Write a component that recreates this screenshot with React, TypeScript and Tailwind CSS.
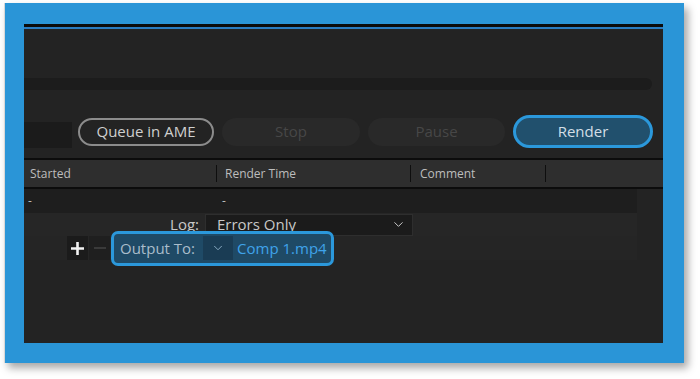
import { ChevronDown } from "lucide-react";

// Render queue panel, zoomed in, with the Render button and the Output To row called out.
const font = { fontFamily: '"Open Sans", "Noto Sans", sans-serif' };

function Divider() {
  return <span className="h-[17px] w-px bg-[#0e0e0e]" />;
}

export default function App() {
  return (
    <div className="h-[379px] w-[700px] overflow-hidden bg-white" style={font}>
      <div className="ml-[4px] mt-[3px] h-[360px] w-[680px] border-l border-[#d8d8d8] bg-[#2a95d7] pl-[19px] pt-[21px] shadow-[4px_5px_8px_rgba(0,0,0,0.35)]">
        <div className="flex h-[319px] w-[639px] flex-col bg-[#232323]">
          <div className="h-[3px] bg-[#0b0b0b]" />
          <div className="h-[2px] bg-[#2a7cc0]" />

          <div className="mt-[49px] h-[12px] w-[628px] rounded-r-full bg-[#1c1c1c]" />

          <div className="mt-[25px] flex h-[33px] items-center">
            <div className="mt-[7px] h-[26px] w-[48px] bg-[#1b1b1b]" />
            <div className="ml-[6px] flex h-[28px] w-[136px] items-center justify-center rounded-full border-2 border-[#8c8c8c] text-[15px] text-[#cfcfcf]">
              Queue in AME
            </div>
            <div className="ml-[8px] flex h-[28px] w-[138px] items-center justify-center rounded-full bg-[#292929] text-[15px] text-[#474747]">
              Stop
            </div>
            <div className="ml-[8px] flex h-[28px] w-[137px] items-center justify-center rounded-full bg-[#292929] text-[15px] text-[#474747]">
              Pause
            </div>
            <div className="ml-[8px] flex h-[33px] w-[140px] items-center justify-center rounded-full border-[3px] border-[#2b98db] bg-[#21506d] text-[15px] text-[#d3dee6]">
              Render
            </div>
          </div>

          <div className="mt-[10px] h-[2px] bg-[#0c0c0c]" />
          <div className="flex h-[27px] items-center bg-[#2e2e2e] text-[12px] text-[#bdbdbd]">
            <span className="ml-[6px] w-[186px]">Started</span>
            <Divider />
            <span className="ml-[8px] w-[185px]">Render Time</span>
            <Divider />
            <span className="ml-[9px] w-[125px]">Comment</span>
            <Divider />
          </div>
          <div className="h-[2px] bg-[#0c0c0c]" />

          <div className="flex h-[24px] w-[613px] items-center bg-[#1e1e1e] text-[12px] text-[#bdbdbd]">
            <span className="ml-[4px] w-[194px]">-</span>
            <span>-</span>
          </div>

          <div className="flex h-[23px] w-[613px] items-center bg-[#262626] text-[15px] text-[#c8c8c8]">
            <span className="w-[175px] text-right">Log:</span>
            <div className="ml-[6px] flex h-[22px] w-[208px] items-center justify-between border border-[#2e2e2e] bg-[#1b1b1b] pl-[11px] pr-[6px]">
              <span className="leading-none">Errors Only</span>
              <ChevronDown size={15} strokeWidth={1.6} className="text-[#c8c8c8]" />
            </div>
          </div>

          <div className="flex h-[24px] w-[613px] items-center bg-[#252525]">
            <div className="ml-[43px] flex h-[24px] w-[21px] items-center justify-center bg-[#1b1b1b]">
              <svg width="15" height="15" viewBox="0 0 15 15">
                <path d="M7.5 1v13M1 7.5h13" stroke="#f2f2f2" strokeWidth="2.6" />
              </svg>
            </div>
            <div className="ml-px flex h-[24px] w-[21px] items-center justify-center bg-[#1f1f1f]">
              <span className="h-[2px] w-[12px] bg-[#3a3a3a]" />
            </div>
            <div className="relative z-10 ml-px flex h-[35px] w-[223px] items-center rounded-[7px] border-[3px] border-[#2b98db] bg-[#1f4a66] text-[15px]">
              <span className="ml-[6px] text-[#aabdcb]">Output To:</span>
              <span className="ml-[8px] flex h-[24px] w-[30px] items-center justify-center bg-[#1a3c54]">
                <ChevronDown size={14} strokeWidth={1.6} className="text-[#8fb0c8]" />
              </span>
              <span className="ml-[4px] text-[#3fa3ea]">Comp 1.mp4</span>
            </div>
          </div>
        </div>
      </div>
    </div>
  );
}
